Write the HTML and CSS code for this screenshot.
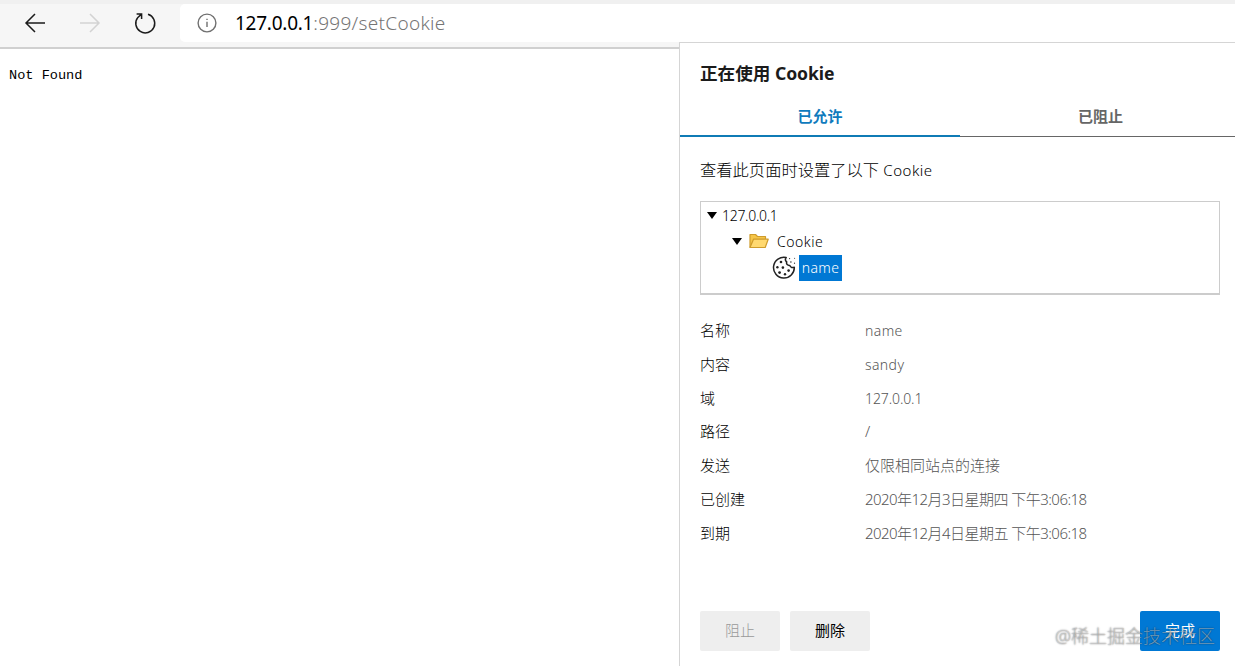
FILE: index.html
```html
<!DOCTYPE html>
<html lang="zh-CN">
<head>
    <meta charset="UTF-8">
    <meta name="viewport" content="width=device-width, initial-scale=1.0">
    <title>127.0.0.1:999/setCookie</title>
    <link rel="stylesheet" href="styles.css">
</head>
<body>

    <header class="toolbar">
        <svg class="nav-icon back" viewBox="0 0 24 24"><path d="M22 12H3M12 3L3 12L12 21"/></svg>
        <svg class="nav-icon forward" viewBox="0 0 24 24"><path d="M2 12H21M12 3L21 12L12 21"/></svg>
        <svg class="nav-icon reload" viewBox="0 0 24 24"><path d="M15 3.3A9.5 9.5 0 1 1 4.9 6.4L8.2 3.4M3.6 3H8.6V8"/></svg>
        <div class="address-bar">
            <svg class="info-icon" viewBox="0 0 20 20"><circle cx="10" cy="10" r="8.9"/><path d="M10 8.7V14M10 5.7V7.1"/></svg>
            <span class="url"><span class="host">127.0.0.1</span><span class="path">:999/setCookie</span></span>
        </div>
    </header>

    <main class="page">Not Found</main>

    <section class="cookie-panel">
        <h2>正在使用 <span class="title-latin">Cookie</span></h2>
        <div class="tabs">
            <div class="tab active">已允许</div>
            <div class="tab">已阻止</div>
        </div>

        <div class="panel-body">
            <p class="intro">查看此页面时设置了以下 <span class="intro-latin">Cookie</span></p>

            <div class="tree">
                <div class="tree-row">
                    <svg class="arrow" viewBox="0 0 10 7"><path d="M0 0H10L5 7Z"/></svg>
                    <span class="tree-host">127.0.0.1</span>
                </div>
                <div class="tree-row level-2">
                    <svg class="arrow" viewBox="0 0 10 7"><path d="M0 0H10L5 7Z"/></svg>
                    <svg class="folder" viewBox="0 0 20 16">
                        <path class="folder-back" d="M1 14.5V1.5H6.5L8.5 3.5H16.5V6"/>
                        <path class="folder-front" d="M1 14.5L4.5 6.2H19.2L16.2 14.5Z"/>
                    </svg>
                    <span class="tree-folder">Cookie</span>
                </div>
                <div class="tree-row level-3">
                    <svg class="cookie" viewBox="0 0 24 24">
                        <path class="cookie-edge" d="M14.2 1.5A10.4 10.4 0 1 0 22.3 11.2C20.8 12 18.4 11.6 17.8 9.4C15.6 9.6 14 8 14.7 5.9C13.3 4.8 13.2 2.9 14.2 1.5Z"/>
                        <g class="crumbs">
                            <circle cx="9" cy="6" r="1.3"/><circle cx="5.4" cy="11.2" r="1.2"/>
                            <circle cx="10.9" cy="11.6" r="1.3"/><circle cx="7.6" cy="16.6" r="1.4"/>
                            <circle cx="13" cy="18.2" r="1.2"/><circle cx="16.6" cy="14.6" r="1.3"/>
                            <circle cx="17.6" cy="2.6" r=".6"/><circle cx="22.6" cy="2.2" r=".5"/>
                            <circle cx="18.9" cy="6" r=".7"/><circle cx="22.5" cy="7.2" r=".6"/>
                        </g>
                    </svg>
                    <span class="selected">name</span>
                </div>
            </div>

            <dl class="details">
                <dt>名称</dt><dd class="latin">name</dd>
                <dt>内容</dt><dd class="latin">sandy</dd>
                <dt>域</dt><dd class="ip">127.0.0.1</dd>
                <dt>路径</dt><dd>/</dd>
                <dt>发送</dt><dd>仅限相同站点的连接</dd>
                <dt>已创建</dt><dd class="date">2020年12月3日星期四 下午3:06:18</dd>
                <dt>到期</dt><dd class="date">2020年12月4日星期五 下午3:06:18</dd>
            </dl>

            <div class="actions">
                <button type="button" disabled>阻止</button>
                <button type="button">删除</button>
                <button type="button" class="primary">完成</button>
            </div>
        </div>
    </section>

    <div class="watermark">@稀土掘金技术社区</div>

</body>
</html>
```

FILE: styles.css
```css
* {
    box-sizing: border-box;
}

body {
    margin: 0;
    height: 666px;
    overflow: hidden;
    position: relative;
    background-color: #fff;
    color: #000;
    font-family: "Noto Sans", "Noto Sans CJK SC", sans-serif;
    font-size: 15px;
    font-weight: 300;
}

svg {
    display: block;
    flex: none;
    fill: none;
}

.toolbar {
    display: flex;
    align-items: center;
    height: 49px;
    padding-left: 23px;
    background-color: #f6f6f6;
    border-top: 4px solid #f0f0f0;
    border-bottom: 2px solid #d0d0d0;
}

.nav-icon {
    width: 24px;
    height: 24px;
    margin: 0 31px 5px 0;
    stroke: #1b1b1b;
    stroke-width: 1.5;
}

.nav-icon.forward {
    stroke: #d3d3d3;
}

.nav-icon.reload {
    margin-right: 23px;
}

.address-bar {
    display: flex;
    align-items: center;
    flex: 1;
    height: 38px;
    margin-bottom: 5px;
    padding-left: 17px;
    background-color: #fff;
    border-radius: 5px 0 0 5px;
}

.info-icon {
    width: 20px;
    height: 20px;
    margin-right: 18px;
    stroke: #707070;
    stroke-width: 1.4;
}

.url {
    font-size: 19px;
    font-weight: 400;
    line-height: 26px;
    white-space: nowrap;
}

.host {
    letter-spacing: -0.25px;
}

.path {
    color: #757575;
    font-weight: 300;
    letter-spacing: 0.3px;
}

.page {
    padding: 19px 9px;
    font-family: "Liberation Mono", monospace;
    font-size: 13.6px;
    line-height: 16px;
}

/* flyout over the page */
.cookie-panel {
    position: absolute;
    top: 42px;
    left: 679px;
    width: 562px;
    height: 624px;
    background-color: #fff;
    border-top: 1px solid #d5d5d5;
    border-left: 1px solid #d5d5d5;
}

h2 {
    margin: 0;
    padding: 17px 20px 0;
    height: 56px;
    font-size: 17.6px;
    line-height: 26px;
    color: #1b1b1b;
    white-space: nowrap;
}

.title-latin {
    letter-spacing: -0.1px;
}

.tabs {
    display: flex;
    height: 38px;
}

.tab {
    width: 281px;
    border-bottom: 1px solid #666;
    color: #666;
    font-weight: bold;
    line-height: 34px;
    text-align: center;
}

.tab.active {
    width: 280px;
    color: #0f7bbd;
    border-bottom: 2px solid #0f7bb5;
}

.panel-body {
    width: 540px;
    padding: 20px 0 0 20px;
}

.intro {
    margin: 0;
    font-size: 16.3px;
    line-height: 26px;
    white-space: nowrap;
}

.intro-latin {
    font-size: 15px;
    letter-spacing: 0.5px;
}

.tree {
    width: 520px;
    height: 94px;
    margin-top: 18px;
    padding: 0 0 0 6px;
    border: 1px solid #ccc;
    border-bottom-width: 2px;
}

.tree-row {
    display: flex;
    align-items: center;
    height: 26px;
}

.level-2 {
    padding-left: 25px;
}

.level-3 {
    height: 28px;
    padding-left: 65px;
}

.arrow {
    width: 10px;
    height: 7px;
    fill: #000;
}

.tree-host {
    margin-left: 5px;
    font-size: 14px;
    letter-spacing: -0.3px;
}

.folder {
    width: 20px;
    height: 16px;
    margin: 0 8px 0 7px;
    stroke: #cf9c2c;
    stroke-width: 1.2;
    stroke-linejoin: round;
}

.folder-back {
    fill: #f5c548;
}

.folder-front {
    fill: #ffd970;
}

.tree-folder {
    font-size: 14px;
    letter-spacing: 0.5px;
}

.cookie {
    width: 24px;
    height: 24px;
    margin: 0 3px 1px 0;
}

.cookie-edge {
    stroke: #222;
    stroke-width: 1.5;
    stroke-linejoin: round;
}

.crumbs {
    fill: #222;
}

.selected {
    width: 43px;
    height: 26px;
    background-color: #0078d4;
    color: #fff;
    font-size: 14px;
    letter-spacing: 0.4px;
    line-height: 26px;
    text-align: center;
}

.details {
    display: grid;
    grid-template-columns: 165px 1fr;
    grid-auto-rows: 33.8px;
    margin: 18px 0 0;
    font-size: 15px;
    line-height: 34px;
    white-space: nowrap;
}

dd {
    margin: 0;
    color: #555;
}

dd.latin {
    padding-top: 1px;
    font-size: 14px;
    letter-spacing: 0.4px;
}

dd.ip {
    padding-top: 1px;
    font-size: 14px;
    letter-spacing: -0.1px;
}

dd.date {
    letter-spacing: -0.54px;
}

.actions {
    display: flex;
    gap: 10px;
    margin-top: 61px;
}

button {
    width: 80px;
    height: 40px;
    padding: 0 0 2px;
    border: none;
    border-radius: 2px;
    background-color: #eee;
    color: #000;
    font-family: inherit;
    font-size: 15px;
    font-weight: 400;
}

button:disabled {
    color: #999;
    font-weight: 300;
}

button.primary {
    margin-left: auto;
    background-color: #0078d4;
    color: #fff;
}

.watermark {
    position: absolute;
    right: 20px;
    bottom: 18px;
    color: rgba(255, 255, 255, 0.45);
    font-size: 18px;
    line-height: 24px;
    text-shadow: 0 0 1.5px rgba(0, 0, 0, 0.7);
    white-space: nowrap;
}
```
